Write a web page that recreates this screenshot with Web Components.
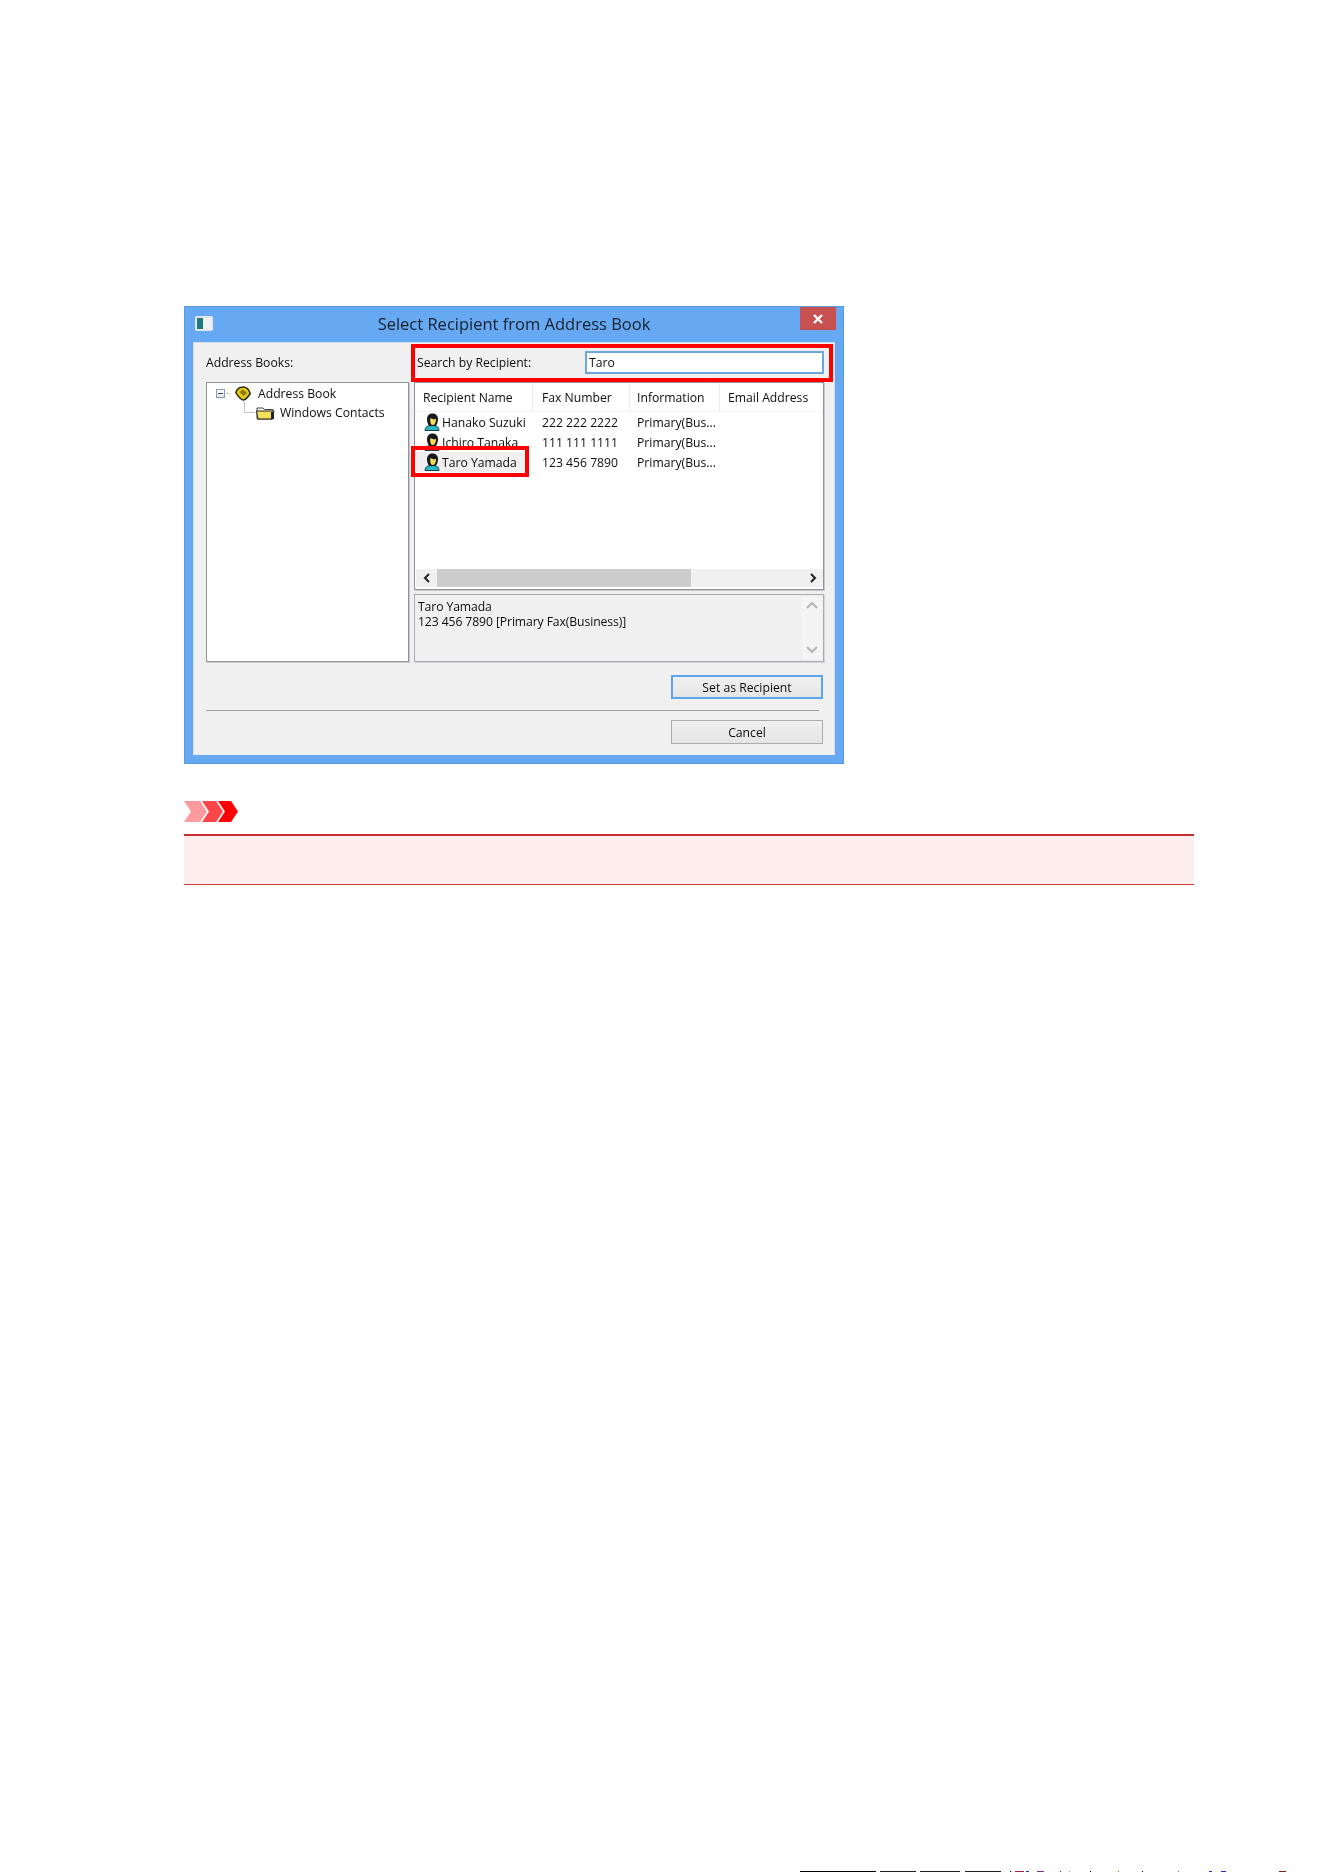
<!DOCTYPE html>
<html>
<head>
<meta charset="utf-8">
<title>Select Recipient from Address Book</title>
<style>
  html, body { margin: 0; background: #fff; }
  body { display: flex; flex-direction: column; height: 1872px; overflow: hidden; font-family: "Open Sans", sans-serif; }
  main { padding: 306px 130px 0 184px; display: flex; flex-direction: column; align-items: flex-start; }
  x-dialog { margin-bottom: 37px; }
  x-page-edge { margin-top: auto; }
</style>
</head>
<body>
<main>
  <x-dialog heading="Select Recipient from Address Book">
    <x-recipient-form></x-recipient-form>
  </x-dialog>
  <x-callout></x-callout>
</main>
<x-page-edge></x-page-edge>

<script>
"use strict";

(function () {
  /* ── shared bits ───────────────────────────────────────────── */
  var UI_FONT = 'font: 12.2px/15px "Open Sans", sans-serif; color: #0c0c0c;';

  var PERSON_ICON =
    '<svg width="17" height="18" viewBox="0 0 17 18">' +
    '<path d="M1 17.500c0-3 2-4.500 4.500-5h5c2.500.5 4.500 2 4.500 5z" fill="#27b6c4" stroke="#16404e" stroke-width="1"/>' +
    '<path d="M3 6C3 2.500 5.500.5 8.500.5S14 2.500 14 6c0 3.500-1 5.500-2.500 7h-6C4 11.500 3 9.500 3 6z" fill="#16181c"/>' +
    '<path d="M6.500 5l3.500 1.500 2-.8c.2 3-1 6.300-3.200 6.300S5.700 8.500 6.500 5z" fill="#f2dc55"/>' +
    '</svg>';

  var BOOK_ICON =
    '<svg width="16" height="15" viewBox="0 0 16 15">' +
    '<path d="M.8 6.500C2 3 5 1 8 1s6 2.500 7.200 6.500C13 11 10 14 8.500 14S3 11 .8 6.500z" fill="#e3c81a" stroke="#2c2800" stroke-width="1.500"/>' +
    '<path d="M4.500 6L8 3.500 12 7l-3.500 3z" fill="#8a7a10"/>' +
    '</svg>';

  var FOLDER_ICON =
    '<svg width="20" height="15" viewBox="0 0 20 15">' +
    '<path d="M2 3h6l1.500 1.500H18V14H2z" fill="#fff" stroke="#444" stroke-width="1"/>' +
    '<path d="M1.500 6H15l4 0-2 8H3z" fill="#f6df5a" stroke="#222" stroke-width="1"/>' +
    '<path d="M16 7h3v7h-3z" fill="#222"/>' +
    '</svg>';

  function shadow(el, html) {
    el.attachShadow({ mode: "open" }).innerHTML = html;
  }

  /* ── Dialog frame ──────────────────────────────────────────── */
  class XDialog extends HTMLElement {
    connectedCallback() {
      shadow(this, `
        <style>
          :host { display: block; width: 660px; height: 458px; box-sizing: border-box;
                  background: #66a9f2; border: 1px solid #5a9be0; filter: blur(.55px); }
          .bar { display: flex; height: 35px; align-items: flex-start; position: relative; }
          .icon { margin: 9px 0 0 10px; width: 18px; height: 15px; box-sizing: border-box; border-radius: 2px;
                  background: linear-gradient(90deg, #1f7a7a 0 45%, #f2f2f2 45%); border: 2px solid #e4e8ec; }
          h1 { flex: 1; margin: 6px 0 0; text-align: center; font: 400 16.500px/22px "Open Sans", sans-serif; color: #16202c; padding-left: 15px; white-space: nowrap; }
          .close { width: 36px; height: 23px; margin-right: 7px; background: #c75050; display: flex; align-items: center; justify-content: center; }
          .client { margin: 0 8px; height: 413px; }
        </style>
        <div class="bar">
          <div class="icon"></div>
          <h1></h1>
          <div class="close">
            <svg width="10" height="10" viewBox="0 0 10 10"><path d="M1 1l8 8M9 1l-8 8" stroke="#fff" stroke-width="2.400"/></svg>
          </div>
        </div>
        <div class="client"><slot></slot></div>
      `);
      this.shadowRoot.querySelector("h1").textContent = this.getAttribute("heading");
    }
  }

  /* ── Form inside the dialog ────────────────────────────────── */
  class XRecipientForm extends HTMLElement {
    connectedCallback() {
      shadow(this, `
        <style>
          :host { display: block; height: 413px; box-sizing: border-box; background: #f0f0f0;
                  border: 1px solid #d4dde6; border-bottom-color: #e8ecf0; padding: 0 10px 0 12px; ${UI_FONT} }
          .top { display: grid; grid-template-columns: 203px 410px; column-gap: 5px; grid-template-rows: 39px 280px; }
          .label { align-self: center; }
          .search { position: relative; display: flex; align-items: center; padding-left: 3px; }
          .search input { all: unset; box-sizing: border-box; position: absolute; left: 171px; top: 8px; width: 239px; height: 23px;
                  background: #fff; border: 2px solid #69a7dc; padding-left: 2px; ${UI_FONT} }
          .mark { position: absolute; box-sizing: border-box; border: 4px solid #f00; pointer-events: none; }
          .search .mark { left: -3px; right: -9px; top: 1px; bottom: 0; }
          .right { display: flex; flex-direction: column; gap: 4px; }
          .actions { display: flex; flex-direction: column; align-items: flex-end; padding-top: 13px; }
          .rule { align-self: stretch; height: 1px; background: #a0a0a0; margin: 11px 5px 9px 0; }
          x-button { margin-right: 1px; }
        </style>
        <div class="top">
          <div class="label">Address Books:</div>
          <div class="search">
            <span>Search by Recipient:</span>
            <input value="Taro">
            <div class="mark"></div>
          </div>
          <x-tree></x-tree>
          <div class="right">
            <x-recipient-list></x-recipient-list>
            <x-detail-box></x-detail-box>
          </div>
        </div>
        <div class="actions">
          <x-button primary>Set as Recipient</x-button>
          <div class="rule"></div>
          <x-button>Cancel</x-button>
        </div>
      `);
    }
  }

  /* ── Address book tree ─────────────────────────────────────── */
  class XTree extends HTMLElement {
    connectedCallback() {
      shadow(this, `
        <style>
          :host { display: block; box-sizing: border-box; height: 280px; background: #fff;
                  border: 1px solid #8f949c; box-shadow: 1px 1px 0 #c8c8cc; padding-top: 1px; ${UI_FONT} }
          .row { display: flex; align-items: center; height: 19px; }
          .one { padding-left: 9px; }
          .two { padding-left: 38px; position: relative; }
          .minus { width: 9px; height: 9px; box-sizing: border-box; border: 1px solid #8a9aa8; background: linear-gradient(#fff, #dfe6ec); position: relative; }
          .minus::after { content: ""; position: absolute; left: 1px; right: 1px; top: 3px; height: 1px; background: #345; }
          .dash { width: 4px; border-top: 1px dotted #b0b0b0; margin: 0 1px; }
          .one svg { margin-right: 6px; margin-left: 0; }
          .two svg { margin-right: 4px; }
          .elbow { width: 11px; height: 13px; border-left: 1px solid #c4c4c4; border-bottom: 1px solid #c4c4c4; margin: -12px 0 0 -1px; flex: none; box-sizing: border-box; }
          .one span:last-child { margin-left: 1px; }
          .two span:last-child { margin-left: 1px; }
        </style>
        <div class="row one"><span class="minus"></span><span class="dash"></span><span style="width:4px"></span>${BOOK_ICON}<span>Address Book</span></div>
        <div class="row two"><span class="elbow"></span>${FOLDER_ICON}<span>Windows Contacts</span></div>
      `);
    }
  }

  /* ── Recipient list ────────────────────────────────────────── */
  var RECIPIENTS = [
    { name: "Hanako Suzuki", fax: "222 222 2222", info: "Primary(Bus..." },
    { name: "Ichiro Tanaka", fax: "111 111 1111", info: "Primary(Bus..." },
    { name: "Taro Yamada", fax: "123 456 7890", info: "Primary(Bus...", marked: true }
  ];

  class XRecipientList extends HTMLElement {
    connectedCallback() {
      var rows = RECIPIENTS.map(function (r) {
        return '<div class="row">' +
          '<div class="who' + (r.marked ? ' sel' : '') + '">' + PERSON_ICON + '<span>' + r.name + '</span>' +
          (r.marked ? '<div class="mark"></div>' : '') + '</div>' +
          '<div class="fax">' + r.fax + '</div>' +
          '<div class="info">' + r.info + '</div><div></div></div>';
      }).join("");

      shadow(this, `
        <style>
          :host { display: flex; flex-direction: column; box-sizing: border-box; height: 208px; background: #fff;
                  border: 1px solid #8f949c; box-shadow: 1px 1px 0 #c8c8cc; padding-bottom: 2px; ${UI_FONT} }
          .head, .row { display: grid; grid-template-columns: 118px 97px 90px 103px; }
          .head { height: 28px; border-bottom: 1px solid #eef3f8; margin-bottom: 0; }
          .head div { display: flex; align-items: center; padding-left: 8px; border-right: 1px solid #e6eef6; white-space: nowrap; }
          .head div:nth-child(2) { padding-left: 9px; }
          .head div:nth-child(3) { padding-left: 7px; }
          .head div:last-child { border-right: 0; }
          .row { height: 20px; align-items: center; }
          .who { display: flex; align-items: center; height: 20px; padding-left: 9px; position: relative; gap: 1px; }
          .who span { background: inherit; white-space: nowrap; }
          .sel { background: linear-gradient(90deg, #f0f0f0 0 100%); margin-right: 4px; }
          .mark { position: absolute; box-sizing: border-box; border: 4px solid #f00; left: -4px; width: 118px; top: -6px; height: 31px; }
          .fax { padding-left: 9px; }
          .info { padding-left: 7px; white-space: nowrap; }
          .rows { flex: 1; }
          .scroll { display: flex; height: 18px; background: #f0f0f0; margin: 0 0 0 1px; align-items: stretch; }
          .arrow { width: 21px; display: flex; align-items: center; justify-content: center; }
          .thumb { width: 254px; background: #cdcdcd; }
          .track { flex: 1; }
        </style>
        <div class="head"><div>Recipient Name</div><div>Fax Number</div><div>Information</div><div>Email Address</div></div>
        <div class="rows">${rows}</div>
        <div class="scroll">
          <div class="arrow"><svg width="8" height="10" viewBox="0 0 8 10"><path d="M6 1L2 5l4 4" fill="none" stroke="#222" stroke-width="2"/></svg></div>
          <div class="thumb"></div>
          <div class="track"></div>
          <div class="arrow"><svg width="8" height="10" viewBox="0 0 8 10"><path d="M2 1l4 4-4 4" fill="none" stroke="#222" stroke-width="2"/></svg></div>
        </div>
      `);
    }
  }

  /* ── Read-only detail box ──────────────────────────────────── */
  class XDetailBox extends HTMLElement {
    connectedCallback() {
      shadow(this, `
        <style>
          :host { display: flex; box-sizing: border-box; height: 68px; background: #f0f0f0;
                  border: 1px solid #a8acb2; box-shadow: 1px 1px 0 #d4d4d8; ${UI_FONT} }
          .text { flex: 1; padding: 4px 3px; letter-spacing: -.1px; }
          .bar { width: 20px; margin: 2px 1px 2px 0; background: #f4f4f4; display: flex; flex-direction: column; justify-content: space-between; align-items: center; padding: 5px 0 6px; box-sizing: border-box; }
        </style>
        <div class="text">Taro Yamada<br>123 456 7890 [Primary Fax(Business)]</div>
        <div class="bar">
          <svg width="12" height="8" viewBox="0 0 12 8"><path d="M1 6l5-5 5 5" fill="none" stroke="#b4b4b4" stroke-width="2"/></svg>
          <svg width="12" height="8" viewBox="0 0 12 8"><path d="M1 2l5 5 5-5" fill="none" stroke="#b4b4b4" stroke-width="2"/></svg>
        </div>
      `);
    }
  }

  /* ── Button ────────────────────────────────────────────────── */
  class XButton extends HTMLElement {
    connectedCallback() {
      shadow(this, `
        <style>
          :host { display: flex; align-items: center; justify-content: center; box-sizing: border-box;
                  width: 152px; height: 24px; border: 1px solid #acacac; background: linear-gradient(#f0f0f0, #e5e5e5); ${UI_FONT} }
          :host([primary]) { border: 2px solid #5ca6ee; }
        </style>
        <slot></slot>
      `);
    }
  }

  /* ── "Important" callout under the dialog ──────────────────── */
  class XCallout extends HTMLElement {
    connectedCallback() {
      shadow(this, `
        <style>
          :host { display: block; width: 1010px; }
          svg { display: block; margin-bottom: 12px; }
          .box { height: 51px; box-sizing: border-box; background: #fdeded; border-top: 2px solid #c93030; border-bottom: 1px solid #d43a3a; }
        </style>
        <svg width="54" height="21" viewBox="0 0 54 21">
          <path d="M0 0h16l7 10.500-7 10.500H0l7-10.500z" fill="#ff9a9e"/>
          <path d="M18 0h14l7 10.500-7 10.500H18l7-10.500z" fill="#ff4747"/>
          <path d="M34 0h13l7 10.500-7 10.500H34l7-10.500z" fill="#ff0000"/>
        </svg>
        <div class="box"><slot></slot></div>
      `);
    }
  }

  /* ── Cut-off line of the next page at the bottom edge ──────── */
  class XPageEdge extends HTMLElement {
    connectedCallback() {
      var marks = [
        [800, 876, "#000"], [880, 916, "#222"], [920, 960, "#222"], [965, 1001, "#222"],
        [1010, 1011, "#000"], [1015, 1024, "#a02040"], [1026, 1029, "#2030c0"], [1037, 1044, "#803080"],
        [1060, 1061, "#2030c0"], [1069, 1070, "#c0a020"], [1090, 1091, "#000"], [1118, 1119, "#a08020"],
        [1142, 1143, "#000"], [1178, 1179, "#a08020"], [1209, 1212, "#2030c0"], [1221, 1226, "#2030c0"],
        [1279, 1286, "#802020"]
      ];
      var html = marks.map(function (m) {
        return '<i style="left:' + m[0] + 'px;width:' + (m[1] - m[0]) + 'px;background:' + m[2] + '"></i>';
      }).join("");
      shadow(this, `
        <style>
          :host { display: block; height: 1px; position: relative; }
          i { position: absolute; top: 0; height: 1px; }
        </style>
        ${html}
      `);
    }
  }

  customElements.define("x-dialog", XDialog);
  customElements.define("x-recipient-form", XRecipientForm);
  customElements.define("x-tree", XTree);
  customElements.define("x-recipient-list", XRecipientList);
  customElements.define("x-detail-box", XDetailBox);
  customElements.define("x-button", XButton);
  customElements.define("x-callout", XCallout);
  customElements.define("x-page-edge", XPageEdge);
})();
</script>
</body>
</html>
